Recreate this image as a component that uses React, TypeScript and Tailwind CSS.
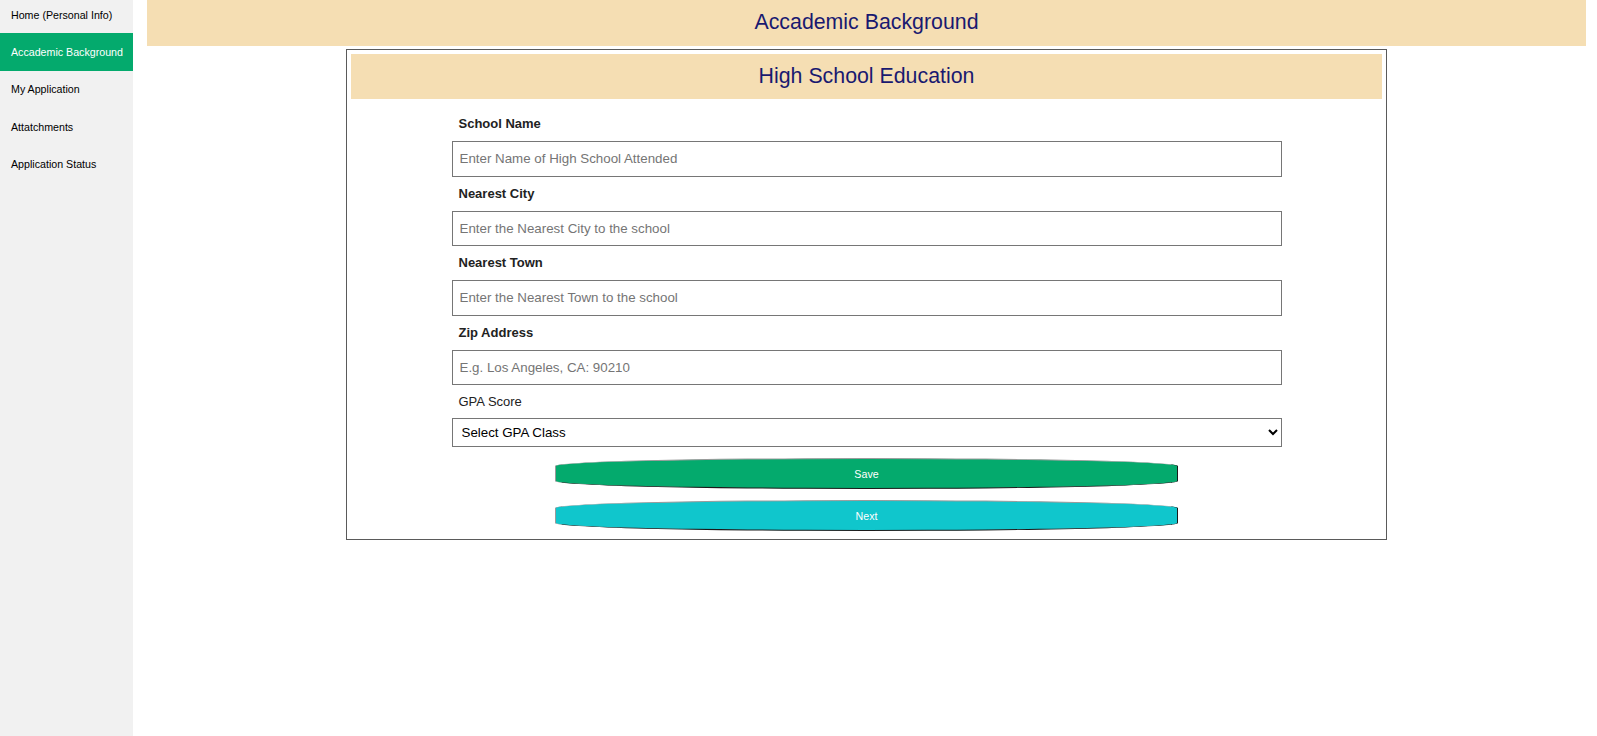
import { useState } from "react";

const NAV = [
  { name: "Home (Personal Info)" },
  { name: "Accademic Background" },
  { name: "My Application" },
  { name: "Attatchments" },
  { name: "Application Status" },
];

const FIELDS = [
  { label: "School Name", placeholder: "Enter Name of High School Attended" },
  { label: "Nearest City", placeholder: "Enter the Nearest City to the school" },
  { label: "Nearest Town", placeholder: "Enter the Nearest Town to the school" },
  { label: "Zip Address", placeholder: "E.g. Los Angeles, CA: 90210" },
];

const App = () => {
  const [active] = useState(1);
  return (
    <div className="flex h-[736px] w-full bg-white font-['Liberation_Sans',Arial,sans-serif]">
      <div className="w-[133px] shrink-0 bg-[#f1f1f1] flex flex-col">
        {NAV.map((item, index) => (
          <a
            key={index}
            href="#"
            className={`flex items-center pl-[11px] text-[10.67px] ${
              index === 0 ? "h-[33px] pb-[3px]" : "h-[37.5px]"
            } ${index === active ? "bg-[#04aa6d] text-white" : "text-black"}`}
          >
            {item.name}
          </a>
        ))}
      </div>

      <div className="flex-1 flex flex-col">
        <div className="ml-[14px] mr-[11px] h-[46px] bg-[#f5deb3] flex items-center justify-center text-[21.33px] text-[#191970]">
          Accademic Background
        </div>

        <div className="mt-[3px] ml-[213px] w-[1041px] border border-[#5a5a5a] p-[4px]">
          <div className="h-[45px] bg-[#f5deb3] flex items-center justify-center text-[21.33px] text-[#191970]">
            High School Education
          </div>

          <div className="w-[830px] mx-auto pt-[8px] pb-[4px] flex flex-col">
            {FIELDS.map((field, index) => (
              <div key={index} className="flex flex-col">
                <label className="h-[34px] flex items-center pl-[7px] text-[13px] font-bold text-[#222]">
                  {field.label}
                </label>
                <input
                  type="text"
                  placeholder={field.placeholder}
                  className="h-[35.5px] w-full border border-[#767676] pl-[7px] text-[13.333px] text-black placeholder:text-[#757575] outline-none"
                />
              </div>
            ))}

            <label className="h-[33px] flex items-center pl-[7px] text-[13px] text-[#222]">
              GPA Score
            </label>
            <select className="h-[29px] w-full border border-[#767676] pl-[5px] pr-[6px] text-[13.333px] text-black bg-white">
              <option>Select GPA Class</option>
              <option>4.0 - 3.5</option>
              <option>3.4 - 3.0</option>
              <option>2.9 - 2.5</option>
              <option>Below 2.5</option>
            </select>

            <button className="mt-[11px] mx-auto w-[623px] h-[31px] rounded-[50%/8px] border border-[#9a9a9a] border-b-[#1a1a1a] border-r-[#1a1a1a] bg-[#04aa6d] text-white text-[10.67px]">
              Save
            </button>
            <button className="mt-[11px] mx-auto w-[623px] h-[31px] rounded-[50%/8px] border border-[#9a9a9a] border-b-[#1a1a1a] border-r-[#1a1a1a] bg-[#10c6cc] text-white text-[10.67px]">
              Next
            </button>
          </div>
        </div>
      </div>
    </div>
  );
};

export default App;
